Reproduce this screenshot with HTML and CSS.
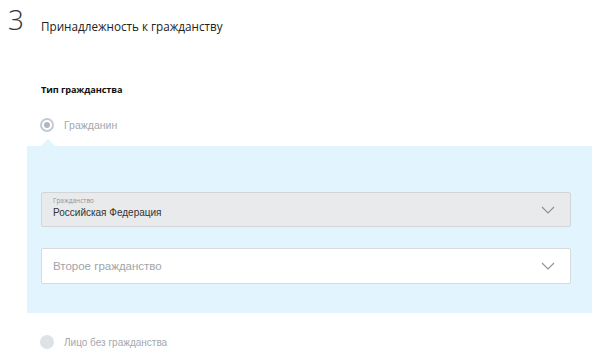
FILE: index.html
```html
<!DOCTYPE html>
<html lang="ru">
<head>
<meta charset="utf-8">
<link rel="stylesheet" href="styles.css">
</head>
<body>
<div class="page">
  <div class="step-head">
    <span class="step-num">3</span>
    <span class="step-title">Принадлежность к гражданству</span>
  </div>
  <div class="group-label">Тип гражданства</div>
  <div class="radio-row">
    <span class="radio checked"><span class="dot"></span></span>
    <span class="radio-text">Гражданин</span>
  </div>
  <div class="panel">
    <div class="field disabled">
      <div class="field-body">
        <div class="field-caption">Гражданство</div>
        <div class="field-value">Российская Федерация</div>
      </div>
      <svg class="chev" width="14" height="8" viewBox="0 0 14 8"><path d="M1 1 L7 7 L13 1" fill="none" stroke="#8a9096" stroke-width="1.1"/></svg>
    </div>
    <div class="field">
      <div class="field-body">
        <div class="field-placeholder">Второе гражданство</div>
      </div>
      <svg class="chev" width="14" height="8" viewBox="0 0 14 8"><path d="M1 1 L7 7 L13 1" fill="none" stroke="#8a9096" stroke-width="1.1"/></svg>
    </div>
  </div>
  <div class="radio-row second">
    <span class="radio empty"></span>
    <span class="radio-text small">Лицо без гражданства</span>
  </div>
</div>
</body>
</html>
```
FILE: styles.css
```css
html, body { margin: 0; padding: 0; background: #fff; }
body { font-family: "Open Sans", "Liberation Sans", sans-serif; color: #222; }
.page { width: 600px; height: 358px; overflow: hidden; }
.step-head { display: flex; align-items: flex-end; height: 33px; }
.step-num { width: 41px; padding-left: 8px; box-sizing: border-box; font-family: "Open Sans", sans-serif; font-weight: 300; font-size: 28px; line-height: 28px; color: #333; }
.step-title { font-size: 11.7px; line-height: 16px; color: #222; position: relative; top: 1px; }
.group-label { margin: 50px 0 0 41px; font-size: 9.2px; font-weight: 700; line-height: 14px; color: #111; letter-spacing: -0.1px; }
.radio-row { display: flex; align-items: center; margin: 20px 0 0 40px; height: 16px; }
.radio { width: 14px; height: 14px; border-radius: 50%; box-sizing: border-box; display: flex; align-items: center; justify-content: center; }
.radio.checked { border: 2px solid #c5cbd1; background: #fff; }
.radio.checked .dot { width: 6px; height: 6px; border-radius: 50%; background: #b0b7be; }
.radio.empty { background: #dde2e7; }
.radio-text { margin-left: 10px; font-size: 10.5px; color: #a3a8ad; font-family: "Liberation Sans", Arial, sans-serif; }
.radio-text.small { font-size: 10px; }
.panel { position: relative; margin: 13px 8px 0 27px; background: #e2f4fd; padding: 46px 21px 29px 14px; display: flex; flex-direction: column; gap: 21px; }
.panel::before { content: ""; position: absolute; left: 14px; top: -7px; border-left: 7px solid transparent; border-right: 7px solid transparent; border-bottom: 7px solid #e2f4fd; }
.field { display: flex; align-items: center; height: 36px; box-sizing: border-box; background: #fff; border: 1px solid #d6dadd; border-radius: 2px; padding: 0 15px 0 11px; }
.field.disabled { height: 35px; background: #e8eaec; border-color: #d3d6d9; }
.field-body { flex: 1; }
.field-caption { font-size: 6.5px; color: #8f959a; line-height: 8px; margin-top: -3px; }
.field-value { font-size: 10px; color: #333; line-height: 14px; font-family: "Liberation Sans", Arial, sans-serif; margin-top: 1px; }
.field-placeholder { font-size: 11.5px; color: #a0a5aa; font-family: "Liberation Sans", Arial, sans-serif; }
.chev { display: block; }
.radio-row.second { margin-top: 21px; }
```
